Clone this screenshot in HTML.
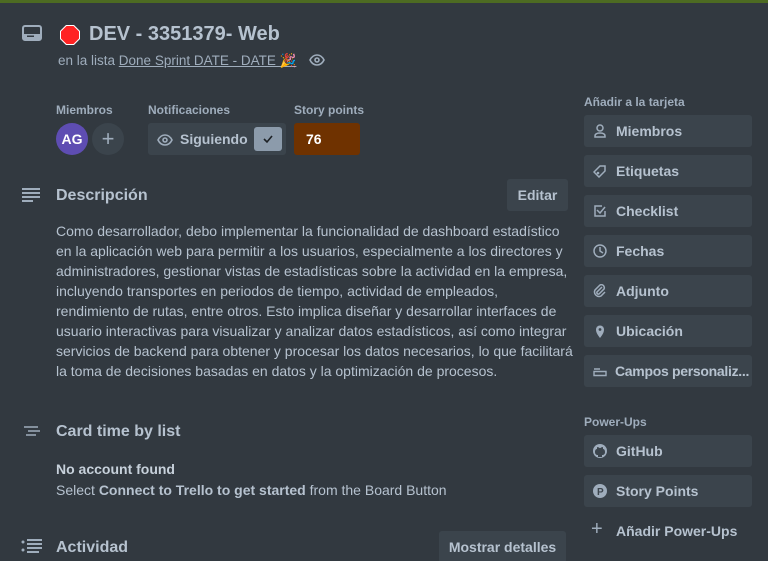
<!DOCTYPE html>
<html><head><meta charset="utf-8"><style>
*{box-sizing:border-box;margin:0;padding:0}
html,body{width:768px;height:561px;overflow:hidden}
body{background:#323940;color:#b6c2cf;font-family:"Liberation Sans",sans-serif;position:relative;font-size:14px}
.a{position:absolute}
.top{left:0;top:0;width:768px;height:3px;background:#4d6b22}
.h1{left:89px;top:23px;font-size:20px;font-weight:bold;color:#b6c2cf}
.lbl{font-size:12px;font-weight:bold;color:#9fadbc}
.btn{position:absolute;left:584px;width:168px;height:32px;background:#3b444c;border-radius:3px;font-weight:bold;font-size:14px;line-height:32px;padding-left:32px;color:#b6c2cf;overflow:hidden;white-space:nowrap}
.btn svg{position:absolute;left:9px;top:9px}
.desc{left:56px;top:221px;width:530px;line-height:20px;font-size:14px;color:#b6c2cf;white-space:nowrap}
.sec{font-size:16px;font-weight:bold}
.gb{position:absolute;background:#3b444c;border-radius:3px;font-weight:bold;color:#b6c2cf;text-align:center}
</style></head><body>
<div class="a top"></div>
<svg class="a" style="left:22px;top:25px" width="20" height="16" viewBox="0 0 20 16"><rect x="1" y="1" width="18" height="14" rx="2" fill="none" stroke="#9fadbc" stroke-width="2"/><rect x="2" y="9" width="16" height="5" fill="#9fadbc"/><rect x="5" y="10.5" width="7" height="1.5" fill="#323940"/></svg>
<svg class="a" style="left:60px;top:25px" width="20" height="20" viewBox="0 0 20 20"><polygon points="6,0 14,0 20,6 20,14 14,20 6,20 0,14 0,6" fill="#fff"/><polygon points="6.5,1 13.5,1 19,6.5 19,13.5 13.5,19 6.5,19 1,13.5 1,6.5" fill="#f22"/></svg>
<div class="a h1">DEV - 3351379- Web</div>
<div class="a" style="left:58px;top:53px;font-size:13.5px;color:#9fadbc">en la lista <span style="text-decoration:underline">Done Sprint DATE - DATE 🎉</span></div>
<svg class="a" style="left:309px;top:54px" width="16" height="12" viewBox="0 0 16 12"><path d="M1 6C3 2 5.5 1 8 1s5 1 7 5c-2 4-4.5 5-7 5S3 10 1 6z" fill="none" stroke="#9fadbc" stroke-width="1.6"/><circle cx="8" cy="6" r="2" fill="none" stroke="#9fadbc" stroke-width="1.6"/></svg>
<div class="a lbl" style="left:56px;top:103px">Miembros</div>
<div class="a lbl" style="left:148px;top:103px">Notificaciones</div>
<div class="a lbl" style="left:294px;top:103px">Story points</div>
<div class="a" style="left:56px;top:123px;width:32px;height:32px;border-radius:50%;background:#5e4db2;color:#fff;font-weight:bold;font-size:14px;text-align:center;line-height:32px">AG</div>
<div class="a" style="left:92px;top:123px;width:32px;height:32px;border-radius:50%;background:#3b444c;color:#9fadbc;font-size:22px;text-align:center;line-height:31px">+</div>
<div class="a" style="left:148px;top:123px;width:138px;height:32px;background:#3b444c;border-radius:3px"></div>
<svg class="a" style="left:157px;top:134px" width="16" height="12" viewBox="0 0 16 12"><path d="M1 6C3 2 5.5 1 8 1s5 1 7 5c-2 4-4.5 5-7 5S3 10 1 6z" fill="none" stroke="#9fadbc" stroke-width="1.6"/><circle cx="8" cy="6" r="2" fill="none" stroke="#9fadbc" stroke-width="1.6"/></svg>
<div class="a" style="left:180px;top:131px;font-weight:bold">Siguiendo</div>
<div class="a" style="left:254px;top:127px;width:28px;height:24px;background:#8c9bab;border-radius:3px"></div>
<svg class="a" style="left:262px;top:134px" width="12" height="10" viewBox="0 0 12 10"><path d="M2 5l3 3 5-6" fill="none" stroke="#1d2125" stroke-width="1.6"/></svg>
<div class="a" style="left:294px;top:123px;width:66px;height:32px;background:#6f3200;border-radius:3px;color:#fff;font-weight:bold;line-height:32px;padding-left:12px">76</div>
<svg class="a" style="left:22px;top:188px" width="18" height="14" viewBox="0 0 18 14"><path d="M0 1h18M0 5h18M0 9h18M0 13h11" stroke="#9fadbc" stroke-width="2"/></svg>
<div class="a sec" style="left:56px;top:187px">Descripción</div>
<div class="gb" style="left:507px;top:179px;width:61px;height:32px;line-height:32px">Editar</div>
<div class="a desc">Como desarrollador, debo implementar la funcionalidad de dashboard estadístico<br>en la aplicación web para permitir a los usuarios, especialmente a los directores y<br>administradores, gestionar vistas de estadísticas sobre la actividad en la empresa,<br>incluyendo transportes en periodos de tiempo, actividad de empleados,<br>rendimiento de rutas, entre otros. Esto implica diseñar y desarrollar interfaces de<br>usuario interactivas para visualizar y analizar datos estadísticos, así como integrar<br>servicios de backend para obtener y procesar los datos necesarios, lo que facilitará<br>la toma de decisiones basadas en datos y la optimización de procesos.</div>
<svg class="a" style="left:24px;top:426px" width="16" height="10" viewBox="0 0 16 10"><path d="M0 1h14M4 5h12M2 9h10" stroke="#9fadbc" stroke-width="1.5"/></svg>
<div class="a sec" style="left:56px;top:423px">Card time by list</div>
<div class="a" style="left:56px;top:461px;font-weight:bold;color:#c7d1db">No account found</div>
<div class="a" style="left:56px;top:482px;color:#b6c2cf">Select <b>Connect to Trello to get started</b> from the Board Button</div>
<svg class="a" style="left:21px;top:539px" width="22" height="16" viewBox="0 0 22 16"><circle cx="2" cy="3" r="1.5" fill="#9fadbc"/><circle cx="2" cy="11" r="1.5" fill="#9fadbc"/><path d="M6 1h15M6 5h15M6 9h15M6 13h12" stroke="#9fadbc" stroke-width="2"/></svg>
<div class="a sec" style="left:56px;top:539px">Actividad</div>
<div class="gb" style="left:439px;top:531px;width:127px;height:32px;line-height:32px">Mostrar detalles</div>
<div class="a lbl" style="left:584px;top:95px">Añadir a la tarjeta</div>
<div class="btn" style="top:115px"><svg width="14" height="14" viewBox="0 0 14 14"><circle cx="7" cy="4" r="3" fill="none" stroke="#9fadbc" stroke-width="1.5"/><path d="M2 13v-1c0-2 2-3 5-3s5 1 5 3v1z" fill="none" stroke="#9fadbc" stroke-width="1.5"/></svg>Miembros</div>
<div class="btn" style="top:155px"><svg width="14" height="14" viewBox="0 0 14 14"><path d="M1 8l6-6h5v5l-6 6z" fill="none" stroke="#9fadbc" stroke-width="1.5"/><circle cx="5" cy="9" r="1.3" fill="#9fadbc"/></svg>Etiquetas</div>
<div class="btn" style="top:195px"><svg width="14" height="14" viewBox="0 0 14 14"><path d="M12 7v5H2V2h7" fill="none" stroke="#9fadbc" stroke-width="1.5"/><path d="M4 6l3 3 5-6" fill="none" stroke="#9fadbc" stroke-width="1.5"/></svg>Checklist</div>
<div class="btn" style="top:235px"><svg width="14" height="14" viewBox="0 0 14 14"><circle cx="7" cy="7" r="6" fill="none" stroke="#9fadbc" stroke-width="1.5"/><path d="M7 3v4l3 2" fill="none" stroke="#9fadbc" stroke-width="1.5"/></svg>Fechas</div>
<div class="btn" style="top:275px"><svg width="14" height="14" viewBox="0 0 14 14"><path d="M9 3L4 8a1.5 1.5 0 0 0 2 2l5-5a3 3 0 0 0-4-4L2 6a4.5 4.5 0 0 0 6 6l4-4" fill="none" stroke="#9fadbc" stroke-width="1.5"/></svg>Adjunto</div>
<div class="btn" style="top:315px"><svg width="14" height="14" viewBox="0 0 14 14"><path d="M7 14C4 10 3 8 3 5.5a4 4 0 0 1 8 0C11 8 10 10 7 14z" fill="#9fadbc"/><circle cx="7" cy="5.5" r="1.4" fill="#3b444c"/></svg>Ubicación</div>
<div class="btn" style="top:355px;padding-left:31px;letter-spacing:-0.3px"><svg width="14" height="14" viewBox="0 0 14 14"><path d="M1 5h6M1 7.5h12v4H1z" fill="none" stroke="#9fadbc" stroke-width="1.4"/></svg>Campos personaliz...</div>
<div class="a lbl" style="left:584px;top:415px">Power-Ups</div>
<div class="btn" style="top:435px"><svg width="14" height="14" viewBox="0 0 14 14"><circle cx="7" cy="7" r="7" fill="#9fadbc"/><path d="M5 13v-2c-2 0-3-1-3-3s1-3 2-3c0-1 0-2 .5-2 1 0 1.5 1 2.5 1s1.5-1 2.5-1c.5 0 .5 1 .5 2 1 0 2 1 2 3s-1 3-3 3v2" fill="#3b444c"/></svg>GitHub</div>
<div class="btn" style="top:475px"><svg width="14" height="14" viewBox="0 0 14 14"><circle cx="7" cy="7" r="7" fill="#9fadbc"/><text x="4" y="11" font-size="10" font-weight="bold" fill="#3b444c" font-family="Liberation Sans">P</text></svg>Story Points</div>
<div class="a" style="left:584px;top:515px;width:168px;height:32px;line-height:32px;padding-left:32px;font-weight:bold">Añadir Power-Ups</div>
<div class="a" style="left:591px;top:518px;font-size:20px;color:#9fadbc">+</div>
</body></html>
